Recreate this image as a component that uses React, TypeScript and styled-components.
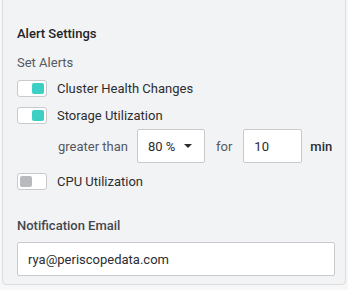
import React from "react";
import styled, { createGlobalStyle } from "styled-components";

const Global = createGlobalStyle`
  html, body { margin: 0; padding: 0; background: #f7f7f8; }
  body { font-family: Roboto, "Liberation Sans", sans-serif; }
`;

const Page = styled.div`
  width: 348px;
  height: 290px;
  padding: 0 2px 1px 2px;
  box-sizing: border-box;
`;

const Card = styled.div`
  box-sizing: border-box;
  height: 289px;
  margin-top: -4px;
  background: #f2f3f5;
  border: 1px solid #dcdde0;
  border-radius: 4px;
  padding: 29px 12px 0 14px;
  display: flex;
  flex-direction: column;
`;

const Title = styled.div`
  font-size: 13px;
  font-weight: 500;
  color: #222428;
  line-height: 16px;
`;

const Label = styled.div`
  margin-top: 13px;
  font-size: 13px;
  color: #55585e;
  line-height: 16px;
`;

const ToggleRow = styled.div<{ $mt: number }>`
  display: flex;
  align-items: center;
  gap: 10px;
  margin-top: ${(p) => p.$mt}px;
  font-size: 13px;
  color: #2b2d31;
  white-space: nowrap;
`;

const Toggle = styled.div<{ $on: boolean }>`
  box-sizing: border-box;
  width: 30px;
  height: 17px;
  border: 1px solid #c9cace;
  border-radius: 3px;
  background: #fff;
  padding: 2px;
  display: flex;
  justify-content: ${(p) => (p.$on ? "flex-end" : "flex-start")};
`;

const Knob = styled.div<{ $on: boolean }>`
  width: 12px;
  height: 11px;
  border-radius: 2px;
  background: ${(p) => (p.$on ? "#3ecfc4" : "#b9babd")};
`;

const Threshold = styled.div`
  display: flex;
  align-items: center;
  margin-top: 5px;
  padding-left: 41px;
  font-size: 13px;
  color: #55585e;
  white-space: nowrap;
`;

const Box = styled.div<{ $w: number }>`
  box-sizing: border-box;
  flex-shrink: 0;
  width: ${(p) => p.$w}px;
  height: 34px;
  background: #fff;
  border: 1px solid #c9cace;
  border-radius: 2px;
  display: flex;
  align-items: center;
  padding: 0 10px;
  font-size: 13px;
  color: #2b2d31;
  justify-content: space-between;
`;

const Caret = styled.span`
  width: 0;
  height: 0;
  border-left: 4px solid transparent;
  border-right: 4px solid transparent;
  border-top: 4px solid #2b2d31;
  margin-right: 2px;
`;

const Word = styled.span<{ $l: number; $r: number; $dark?: boolean }>`
  flex-shrink: 0;
  margin-left: ${(p) => p.$l}px;
  margin-right: ${(p) => p.$r}px;
  color: ${(p) => (p.$dark ? "#2b2d31" : "#55585e")};
  font-weight: ${(p) => (p.$dark ? 500 : 400)};
`;

const EmailLabel = styled.div`
  margin-top: 28px;
  font-size: 13px;
  font-weight: 500;
  color: #44474d;
  line-height: 16px;
`;

const EmailInput = styled.div`
  box-sizing: border-box;
  margin-top: 8px;
  width: 318px;
  height: 34px;
  background: #fff;
  border: 1px solid #c9cace;
  border-radius: 2px;
  display: flex;
  align-items: center;
  padding: 0 10px;
  font-size: 13px;
  color: #2b2d31;
`;

export default function App() {
  return (
    <Page>
      <Global />
      <Card>
        <Title>Alert Settings</Title>
        <Label>Set Alerts</Label>
        <ToggleRow $mt={9}>
          <Toggle $on><Knob $on /></Toggle>
          Cluster Health Changes
        </ToggleRow>
        <ToggleRow $mt={10}>
          <Toggle $on><Knob $on /></Toggle>
          Storage Utilization
        </ToggleRow>
        <Threshold>
          <Word $l={0} $r={9}>greater than</Word>
          <Box $w={68}>80 %<Caret /></Box>
          <Word $l={11} $r={11}>for</Word>
          <Box $w={59}>10</Box>
          <Word $l={8} $r={0} $dark>min</Word>
        </Threshold>
        <ToggleRow $mt={10}>
          <Toggle $on={false}><Knob $on={false} /></Toggle>
          CPU Utilization
        </ToggleRow>
        <EmailLabel>Notification Email</EmailLabel>
        <EmailInput>rya@periscopedata.com</EmailInput>
      </Card>
    </Page>
  );
}
